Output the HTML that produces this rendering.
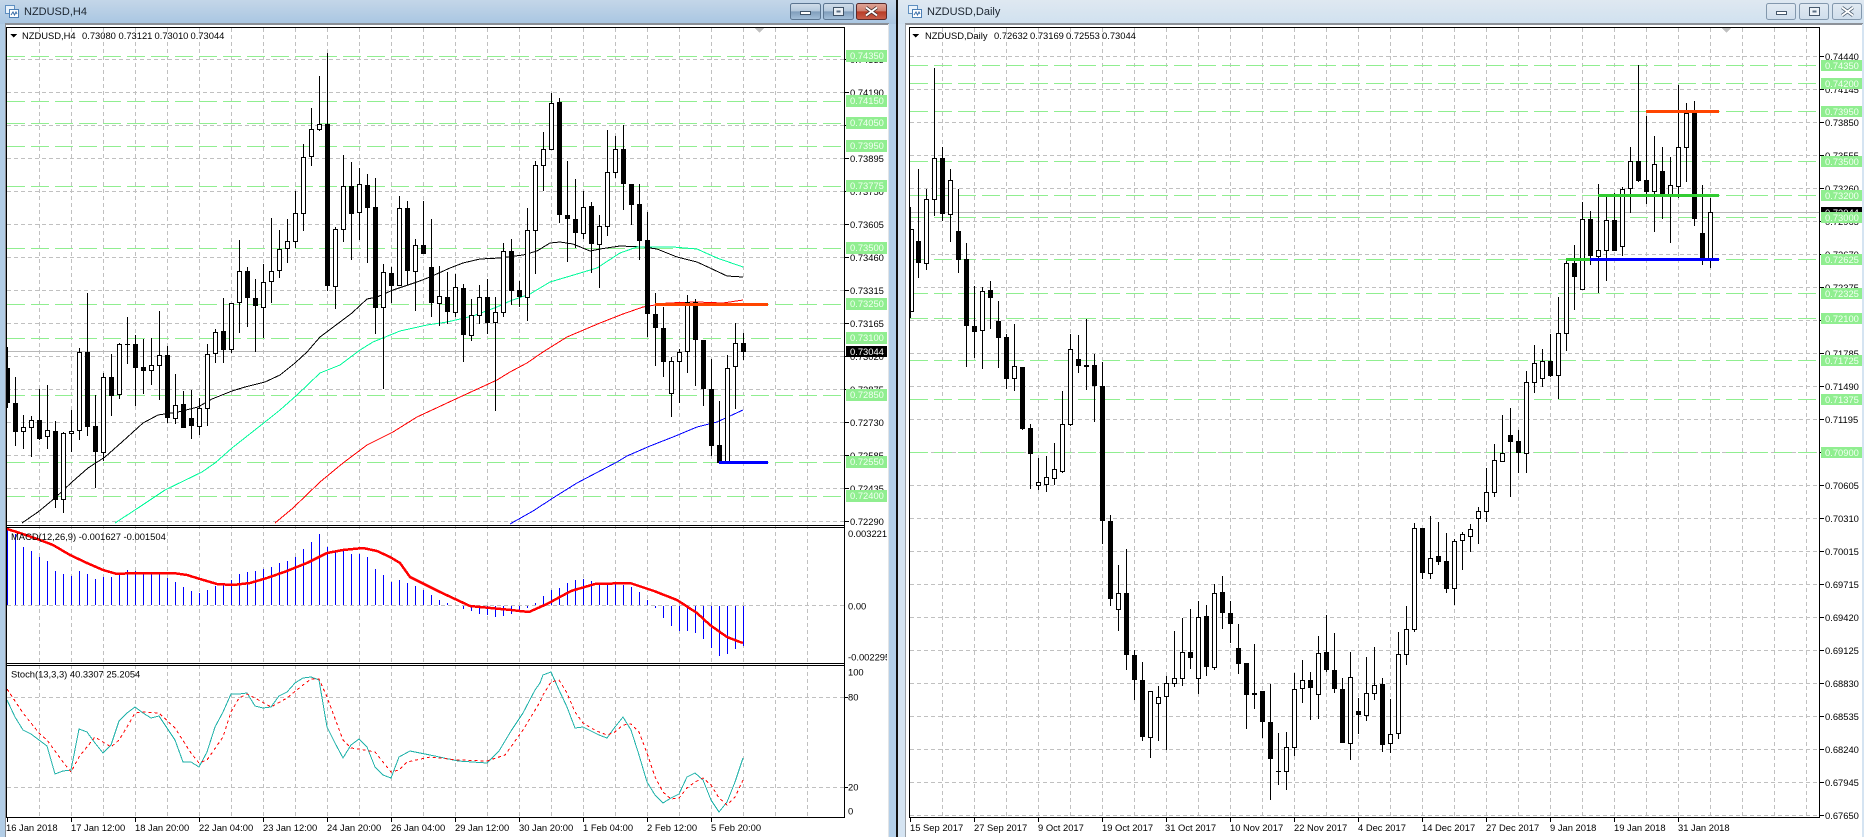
<!DOCTYPE html>
<html><head><meta charset="utf-8"><title>NZDUSD charts</title>
<style>
html,body{margin:0;padding:0;background:#fff;width:1864px;height:837px;overflow:hidden}
svg{display:block;position:absolute;left:0;top:0}
text{font-family:"Liberation Sans",sans-serif;font-size:9.4px;fill:#000;shape-rendering:auto}
.t{font-size:11px;fill:#1c2530}
.g{fill:#f2fff2}
.w{fill:#fff}
</style></head><body>
<svg width="1864" height="837" viewBox="0 0 1864 837" xmlns="http://www.w3.org/2000/svg" shape-rendering="crispEdges">
<defs>
<linearGradient id="ta" x1="0" y1="0" x2="0" y2="1"><stop offset="0" stop-color="#c4d6e8"/><stop offset="1" stop-color="#a9c6e2"/></linearGradient>
<linearGradient id="ti" x1="0" y1="0" x2="0" y2="1"><stop offset="0" stop-color="#dfe8f1"/><stop offset="1" stop-color="#d0e1f0"/></linearGradient>
<linearGradient id="ba" x1="0" y1="0" x2="0" y2="1"><stop offset="0" stop-color="#d2deea"/><stop offset=".48" stop-color="#b4c8dc"/><stop offset=".5" stop-color="#7e9cba"/><stop offset="1" stop-color="#a5c0da"/></linearGradient>
<linearGradient id="bc" x1="0" y1="0" x2="0" y2="1"><stop offset="0" stop-color="#dfa598"/><stop offset=".48" stop-color="#cf7f6e"/><stop offset=".5" stop-color="#b83a24"/><stop offset="1" stop-color="#c9604c"/></linearGradient>
<linearGradient id="bi" x1="0" y1="0" x2="0" y2="1"><stop offset="0" stop-color="#e2eaf2"/><stop offset="1" stop-color="#cfdeec"/></linearGradient>
</defs>
<!-- window chrome -->
<rect width="1864" height="837" fill="#fff"/>
<rect x="0" y="0" width="897" height="24" fill="url(#ta)"/>
<rect x="0" y="24" width="5" height="813" fill="#b2cde6"/>
<rect x="5" y="23" width="884" height="2" fill="#8a8f96"/>
<rect x="5" y="24" width="1" height="813" fill="#8a8f96"/>
<rect x="888" y="24" width="1" height="813" fill="#e2e4e6"/>
<rect x="889" y="24" width="7" height="813" fill="#b3cfe9"/>
<rect x="896" y="0" width="2" height="837" fill="#111"/>
<rect x="898" y="0" width="966" height="24" fill="url(#ti)"/>
<rect x="898" y="24" width="7" height="813" fill="#d5e4f2"/>
<rect x="905" y="23" width="958" height="2" fill="#8d9299"/>
<rect x="905" y="24" width="1" height="813" fill="#9aa0a6"/>
<rect x="1862" y="24" width="2" height="813" fill="#d5e4f2"/>
<!-- title icons -->
<g shape-rendering="auto">
<rect x="5.500" y="5.500" width="9" height="8" fill="#eaf3fb" stroke="#5f8fc0"/>
<rect x="9.500" y="9.500" width="9" height="8" fill="#fff" stroke="#4c7fb5"/>
<path d="M11 15l2-3 1.500 3 1.500-3 1 2" fill="none" stroke="#3a6ea8"/>
<rect x="908.500" y="5.500" width="9" height="8" fill="#eaf3fb" stroke="#5f8fc0"/>
<rect x="912.500" y="9.500" width="9" height="8" fill="#fff" stroke="#4c7fb5"/>
<path d="M914 15l2-3 1.500 3 1.500-3 1 2" fill="none" stroke="#3a6ea8"/>
</g>
<text class="t" x="24" y="15">NZDUSD,H4</text>
<text class="t" x="927" y="15">NZDUSD,Daily</text>
<!-- window buttons -->
<g shape-rendering="auto">
<rect x="790.500" y="3.500" width="30" height="16" rx="2" fill="url(#ba)" stroke="#5b7590"/>
<rect x="800.500" y="11.500" width="10" height="3" fill="#fff" stroke="#3f5266"/>
<rect x="823.500" y="3.500" width="30" height="16" rx="2" fill="url(#ba)" stroke="#5b7590"/>
<rect x="833.500" y="7.500" width="10" height="8" fill="#e8eef4" stroke="#3f5266"/>
<rect x="836.500" y="10.500" width="4" height="2" fill="#5a6f85"/>
<rect x="856.500" y="3.500" width="30" height="16" rx="2" fill="url(#bc)" stroke="#5a2a2a"/>
<path d="M866 7.500l11 8M877 7.500l-11 8" stroke="#3f2a2a" stroke-width="3.400"/>
<path d="M866 7.500l11 8M877 7.500l-11 8" stroke="#fff" stroke-width="2"/>
<rect x="1766.500" y="3.500" width="29" height="16" rx="2" fill="url(#bi)" stroke="#8398ad"/>
<rect x="1776.500" y="11.500" width="10" height="3" fill="#fff" stroke="#46586b"/>
<rect x="1799.500" y="3.500" width="29" height="16" rx="2" fill="url(#bi)" stroke="#8398ad"/>
<rect x="1809.500" y="7.500" width="10" height="8" fill="#eef3f8" stroke="#46586b"/>
<rect x="1812.500" y="10.500" width="4" height="2" fill="#5a6f85"/>
<rect x="1832.500" y="3.500" width="29" height="16" rx="2" fill="url(#bi)" stroke="#8398ad"/>
<path d="M1842 7.500l11 8M1853 7.500l-11 8" stroke="#46586b" stroke-width="3.400"/>
<path d="M1842 7.500l11 8M1853 7.500l-11 8" stroke="#fff" stroke-width="2"/>
</g>

<!-- LEFT grid -->
<g fill="none" stroke="#c0c0c0" stroke-dasharray="4 3">
<path d="M39.5 28V818M71.5 28V818M103.5 28V818M135.5 28V818M167.5 28V818M199.5 28V818M231.5 28V818M263.5 28V818M295.5 28V818M327.5 28V818M359.5 28V818M391.5 28V818M423.5 28V818M455.5 28V818M487.5 28V818M519.5 28V818M551.5 28V818M583.5 28V818M615.5 28V818M647.5 28V818M679.5 28V818M711.5 28V818M743.5 28V818M775.5 28V818M807.5 28V818"/>
<path d="M7 59.5H844M7 92.5H844M7 125.5H844M7 158.5H844M7 191.5H844M7 224.5H844M7 257.5H844M7 290.5H844M7 323.5H844M7 356.5H844M7 389.5H844M7 422.5H844M7 455.5H844M7 488.5H844M7 521.5H844M7 605.5H844M7 697.5H844M7 787.5H844"/>
</g>
<path d="M7 351.5H844" stroke="#b8b8b8"/>
<path d="M7 56.5H841M7 101.5H841M7 123.5H841M7 146.5H841M7 186.5H841M7 248.5H841M7 304.5H841M7 338.5H841M7 395.5H841M7 462.5H841M7 496.5H841" stroke="#90ee90" stroke-dasharray="18 6" fill="none"/>
<!-- triangle -->
<path d="M755 28h9l-4.500 5z" fill="#c0c0c0"/>
<!-- MAs -->
<g fill="none">
<polyline stroke="#000" points="22,523 38,512 55,498 72,482 88,468 105,457 122,442 143,423 158,415 178,412 198,407 212,399 232,391 245,387 265,382 280,375 295,363 307,352 320,337 340,322 352,313 367,299 377,297 393,290 417,282 430,277 450,268 463,263 480,259 500,258 523,255 537,251 550,243 560,242 573,244 590,251 600,249 620,246 643,247 657,249 677,257 697,262 710,268 727,276 743,277"/>
<polyline stroke="#00fa9a" points="115,523 138,508 165,490 202,472 215,463 232,448 265,422 280,410 297,395 320,373 340,365 360,350 373,342 400,331 427,325 447,322 473,316 497,307 510,301 530,294 550,282 577,274 597,268 620,253 637,247 673,247 697,249 717,258 743,267"/>
<polyline stroke="#ff0000" points="275,523 293,508 320,482 343,463 367,445 393,432 417,417 460,397 497,380 510,372 527,363 543,352 567,337 600,323 623,314 643,307 667,303 697,302 723,303 743,300"/>
<polyline stroke="#0000ff" points="510,524 533,511 553,498 577,483 617,462 627,456 650,446 673,437 697,427 717,422 743,410"/>
</g>
<!-- LEFT candles -->
<path stroke="#000" fill="none" d="M7.5 347V408M15.5 377V446M23.5 415V449M31.5 416V457M39.5 389V440M47.5 385V449M55.5 421V508M63.5 432V513M71.5 410V452M79.5 348V440M87.5 293V436M95.5 395V488M103.5 373V461M111.5 354V416M119.5 343V399M127.5 317V364M135.5 335V406M143.5 339V394M151.5 338V385M159.5 311V400M167.5 346V423M175.5 374V424M183.5 391V428M191.5 390V439M199.5 398V435M207.5 344V426M215.5 329V363M223.5 298V363M231.5 303V353M239.5 240V333M247.5 267V327M255.5 279V352M263.5 264V338M271.5 218V303M279.5 230V278M287.5 219V263M295.5 191V248M303.5 144V231M311.5 108V166M319.5 76V131M327.5 53V291M335.5 227V309M343.5 155V242M351.5 162V260M359.5 168V240M367.5 174V263M375.5 178V334M383.5 264V389M391.5 267V303M399.5 196V286M407.5 201V285M415.5 239V311M423.5 201V254M431.5 219V317M439.5 266V326M447.5 272V324M455.5 274V317M463.5 284V362M471.5 299V341M479.5 285V324M487.5 279V334M495.5 297V411M503.5 243V317M511.5 239V305M519.5 281V307M527.5 208V321M535.5 161V274M543.5 132V191M551.5 93V150M559.5 98V223M567.5 161V262M575.5 179V248M583.5 191V239M591.5 202V273M599.5 215V288M607.5 130V236M615.5 136V178M623.5 125V210M631.5 184V225M639.5 184V260M647.5 212V337M655.5 293V366M663.5 307V377M671.5 357V417M679.5 349V403M687.5 295V373M695.5 299V386M703.5 340V406M711.5 359V456M719.5 401V463M727.5 355V462M735.5 323V409M743.5 333V360"/>
<path fill="#000" d="M7 368h3V403h-3zM13 403h5V432h-5zM37 420h5V439h-5zM53 431h5V500h-5zM85 352h5V427h-5zM93 426h5V452h-5zM109 377h5V396h-5zM125 344h5v1h-5zM133 344h5V368h-5zM141 367h5V371h-5zM165 355h5V418h-5zM181 404h5V428h-5zM189 418h5V426h-5zM221 331h5V350h-5zM245 271h5V298h-5zM253 298h5V306h-5zM325 124h5V286h-5zM349 186h5V214h-5zM365 185h5V208h-5zM373 207h5V308h-5zM389 273h5V286h-5zM405 208h5V271h-5zM421 245h5V254h-5zM429 267h5V303h-5zM445 297h5V312h-5zM461 288h5V335h-5zM485 297h5V323h-5zM509 251h5V291h-5zM517 290h5V297h-5zM557 102h5V215h-5zM565 215h5V219h-5zM573 219h5V233h-5zM589 206h5V244h-5zM621 149h5V184h-5zM629 184h5V205h-5zM637 204h5V241h-5zM645 240h5V314h-5zM653 314h5V328h-5zM661 328h5V362h-5zM693 302h5V340h-5zM701 340h5V389h-5zM709 389h5V446h-5zM717 445h5V463h-5zM741 343h5V352h-5z"/>
<path fill="#fff" stroke="#000" d="M21.5 427.5h4V431.5h-4zM29.5 420.5h4V427.5h-4zM45.5 430.5h4V436.5h-4zM61.5 433.5h4V499.5h-4zM69.5 431.5h4V433.5h-4zM77.5 352.5h4V430.5h-4zM101.5 377.5h4V452.5h-4zM117.5 344.5h4V394.5h-4zM149.5 365.5h4V370.5h-4zM157.5 355.5h4V365.5h-4zM173.5 405.5h4V418.5h-4zM197.5 408.5h4V426.5h-4zM205.5 354.5h4V408.5h-4zM213.5 332.5h4V353.5h-4zM229.5 303.5h4V349.5h-4zM237.5 271.5h4V302.5h-4zM261.5 282.5h4V307.5h-4zM269.5 271.5h4V281.5h-4zM277.5 249.5h4V270.5h-4zM285.5 241.5h4V248.5h-4zM293.5 213.5h4V241.5h-4zM301.5 157.5h4V213.5h-4zM309.5 129.5h4V156.5h-4zM317.5 124.5h4V129.5h-4zM333.5 229.5h4V286.5h-4zM341.5 186.5h4V229.5h-4zM357.5 184.5h4V212.5h-4zM381.5 272.5h4V307.5h-4zM397.5 208.5h4V285.5h-4zM413.5 245.5h4V271.5h-4zM437.5 296.5h4V303.5h-4zM453.5 287.5h4V312.5h-4zM469.5 315.5h4V335.5h-4zM477.5 297.5h4V315.5h-4zM493.5 312.5h4V322.5h-4zM501.5 251.5h4V312.5h-4zM525.5 230.5h4V297.5h-4zM533.5 165.5h4V230.5h-4zM541.5 149.5h4V165.5h-4zM549.5 103.5h4V149.5h-4zM581.5 207.5h4V233.5h-4zM597.5 226.5h4V244.5h-4zM605.5 172.5h4V226.5h-4zM613.5 149.5h4V172.5h-4zM669.5 361.5h4V393.5h-4zM677.5 352.5h4V361.5h-4zM685.5 302.5h4V351.5h-4zM725.5 368.5h4V462.5h-4zM733.5 343.5h4V366.5h-4z"/>
<rect x="655" y="303" width="113" height="3" fill="#ff4500"/>
<rect x="719" y="461" width="49" height="3" fill="#0000ff"/>

<!-- MACD -->
<path stroke="#0000ff" fill="none" d="M7.5 605V528M15.5 605V534M23.5 605V547M31.5 605V551M39.5 605V557M47.5 605V561M55.5 605V571M63.5 605V574M71.5 605V576M79.5 605V571M87.5 605V574M95.5 605V579M103.5 605V577M111.5 605V577M119.5 605V574M127.5 605V570M135.5 605V571M143.5 605V573M151.5 605V573M159.5 605V573M167.5 605V578M175.5 605V582M183.5 605V587M191.5 605V591M199.5 605V593M207.5 605V590M215.5 605V586M223.5 605V584M231.5 605V580M239.5 605V574M247.5 605V572M255.5 605V571M263.5 605V569M271.5 605V567M279.5 605V563M287.5 605V561M295.5 605V557M303.5 605V549M311.5 605V542M319.5 605V534M327.5 605V547M335.5 605V552M343.5 605V551M351.5 605V554M359.5 605V554M367.5 605V557M375.5 605V569M383.5 605V575M391.5 605V582M399.5 605V580M407.5 605V583M415.5 605V586M423.5 605V590M431.5 605V595M439.5 605V600M447.5 605V603M463.5 606V609M471.5 606V611M479.5 606V614M487.5 606V615M495.5 606V617M503.5 606V616M511.5 606V614M519.5 606V611M527.5 606V608M535.5 605V603M543.5 605V596M551.5 605V590M559.5 605V588M567.5 605V583M575.5 605V580M583.5 605V579M591.5 605V581M599.5 605V583M607.5 605V585M615.5 605V584M623.5 605V585M631.5 605V587M639.5 605V592M647.5 605V600M655.5 606V608M663.5 606V618M671.5 606V626M679.5 606V631M687.5 606V631M695.5 606V633M703.5 606V639M711.5 606V648M719.5 606V656M727.5 606V654M735.5 606V649M743.5 606V646"/>
<polyline fill="none" stroke="#ff0000" stroke-width="2.500" points="7,529 20,533 40,540 53,545 70,555 87,563 103,570 117,574 133,573 173,573 187,575 200,579 217,584 233,585 250,583 267,578 287,571 307,563 327,553 343,550 363,548 377,551 390,557 400,563 410,577 440,592 470,606 511,610 529,612 547,604 571,591 595,584 630,583 654,591 677,600 697,613 710,625 727,637 740,642 743,643"/>

<!-- Stoch -->
<polyline fill="none" stroke="#20b2aa" points="7,700 15,717 23,730 31,734 39,740 47,746 55,774 63,771 71,770 79,729 87,732 95,743 103,753 111,745 119,721 127,713 135,707 143,713 151,718 159,716 167,728 175,740 183,762 191,762 199,767 207,752 215,727 223,712 231,694 239,694 247,693 255,706 263,708 271,707 279,696 287,692 295,683 303,678 311,677 319,680 327,727 335,743 343,758 351,745 359,739 367,747 375,767 383,775 391,778 399,757 410,751 430,755 458,761 487,763 499,751 511,731 523,713 535,690 540,683 543,675 551,672 559,690 567,707 575,728 583,727 591,731 599,735 607,738 615,727 623,717 631,730 639,755 647,782 655,795 663,803 671,798 679,794 687,777 695,773 703,780 711,800 719,812 727,802 735,782 743,758"/>
<polyline fill="none" stroke="#ff0000" stroke-dasharray="3 3" points="7,689 23,713 39,733 47,740 63,762 71,772 79,757 95,737 111,747 119,740 127,727 135,713 143,712 159,713 175,728 191,753 199,763 207,760 223,737 231,712 239,698 247,694 255,698 271,707 287,698 303,685 311,679 319,679 327,697 343,740 351,748 359,749 375,752 391,772 399,770 407,762 430,757 458,760 487,761 505,755 523,730 540,702 543,695 551,682 559,680 567,693 575,712 583,723 591,728 599,732 607,735 615,732 623,725 631,724 639,732 647,753 655,777 663,792 671,799 679,798 687,788 695,782 703,778 711,785 719,798 727,805 735,797 743,780"/>

<!-- LEFT frame -->
<path stroke="#000" fill="none" d="M6.5 27.5H844.5V817.5H6.5ZM6 525.5H845M6 527.5H845M6 663.5H845M6 665.5H845"/>
<path stroke="#000" fill="none" d="M845 59.500h4M845 92.500h4M845 125.500h4M845 158.500h4M845 191.500h4M845 224.500h4M845 257.500h4M845 290.500h4M845 323.500h4M845 356.500h4M845 389.500h4M845 422.500h4M845 455.500h4M845 488.500h4M845 521.500h4M845 697.500h3M845 787.500h3M7.500 818v4M71.500 818v4M135.500 818v4M199.500 818v4M263.500 818v4M327.500 818v4M391.500 818v4M455.500 818v4M519.500 818v4M583.500 818v4M647.500 818v4M711.500 818v4"/>
<path d="M10 34h7l-3.500 3.500z" fill="#000"/>
<text x="22" y="39">NZDUSD,H4</text><text x="82" y="39">0.73080</text><text x="118.500" y="39">0.73121</text><text x="154.500" y="39">0.73010</text><text x="190.500" y="39">0.73044</text>
<text x="11" y="540">MACD(12,26,9) -0.001627 -0.001504</text>
<text x="11" y="677.500">Stoch(13,3,3) 40.3307 25.2054</text>
<!-- left axis -->
<g>
<text x="850" y="63">0.74335</text><text x="850" y="96">0.74190</text><text x="850" y="129">0.74042</text><text x="850" y="162">0.73895</text><text x="850" y="195">0.73750</text><text x="850" y="228">0.73605</text><text x="850" y="261">0.73460</text><text x="850" y="294">0.73315</text><text x="850" y="327">0.73165</text><text x="850" y="360">0.73020</text><text x="850" y="393">0.72875</text><text x="850" y="426">0.72730</text><text x="850" y="459">0.72585</text><text x="850" y="492">0.72435</text><text x="850" y="525">0.72290</text>
<text x="848" y="537">0.003221</text><text x="848" y="609.500">0.00</text>
<svg x="845" y="640" width="42" height="30"><text x="3" y="20.500">-0.002295</text></svg>
<text x="848" y="675.500">100</text><text x="848" y="700.500">80</text><text x="848" y="790.500">20</text><text x="848" y="814.500">0</text>
</g>
<g fill="#90ee90">
<rect x="846" y="50" width="41" height="12"/><rect x="846" y="95" width="41" height="12"/><rect x="846" y="117" width="41" height="12"/><rect x="846" y="140" width="41" height="12"/><rect x="846" y="180" width="41" height="12"/><rect x="846" y="242" width="41" height="12"/><rect x="846" y="298" width="41" height="12"/><rect x="846" y="332" width="41" height="12"/><rect x="846" y="389" width="41" height="12"/><rect x="846" y="456" width="41" height="12"/><rect x="846" y="490" width="41" height="12"/>
</g>
<rect x="846" y="346" width="41" height="11" fill="#000"/>
<text class="w" x="850" y="355">0.73044</text>
<text class="g" x="850" y="59">0.74350</text><text class="g" x="850" y="104">0.74150</text><text class="g" x="850" y="126">0.74050</text><text class="g" x="850" y="149">0.73950</text><text class="g" x="850" y="189">0.73775</text><text class="g" x="850" y="251">0.73500</text><text class="g" x="850" y="307">0.73250</text><text class="g" x="850" y="341">0.73100</text><text class="g" x="850" y="398">0.72850</text><text class="g" x="850" y="465">0.72550</text><text class="g" x="850" y="499">0.72400</text>
<!-- left x axis -->
<text x="6" y="831">16 Jan 2018</text><text x="71" y="831">17 Jan 12:00</text><text x="135" y="831">18 Jan 20:00</text><text x="199" y="831">22 Jan 04:00</text><text x="263" y="831">23 Jan 12:00</text><text x="327" y="831">24 Jan 20:00</text><text x="391" y="831">26 Jan 04:00</text><text x="455" y="831">29 Jan 12:00</text><text x="519" y="831">30 Jan 20:00</text><text x="583" y="831">1 Feb 04:00</text><text x="647" y="831">2 Feb 12:00</text><text x="711" y="831">5 Feb 20:00</text>

<!-- RIGHT grid -->
<g fill="none" stroke="#c0c0c0" stroke-dasharray="4 3">
<path d="M942.5 28V818M974.5 28V818M1006.5 28V818M1038.5 28V818M1070.5 28V818M1102.5 28V818M1134.5 28V818M1166.5 28V818M1198.5 28V818M1230.5 28V818M1262.5 28V818M1294.5 28V818M1326.5 28V818M1358.5 28V818M1390.5 28V818M1422.5 28V818M1454.5 28V818M1486.5 28V818M1518.5 28V818M1550.5 28V818M1582.5 28V818M1614.5 28V818M1646.5 28V818M1678.5 28V818M1710.5 28V818M1742.5 28V818M1774.5 28V818M1806.5 28V818"/>
<path d="M910 56.5H1819M910 89.5H1819M910 122.5H1819M910 155.5H1819M910 188.5H1819M910 221.5H1819M910 254.5H1819M910 287.5H1819M910 320.5H1819M910 353.5H1819M910 386.5H1819M910 419.5H1819M910 452.5H1819M910 485.5H1819M910 518.5H1819M910 551.5H1819M910 584.5H1819M910 617.5H1819M910 650.5H1819M910 683.5H1819M910 716.5H1819M910 749.5H1819M910 782.5H1819M910 815.5H1819"/>
</g>
<path d="M910 212.5H1819" stroke="#b8b8b8"/>
<path d="M910 65.5H1816M910 83.5H1816M910 111.5H1816M910 161.5H1816M910 195.5H1816M910 217.5H1816M910 259.5H1816M910 293.5H1816M910 318.5H1816M910 360.5H1816M910 399.5H1816M910 452.5H1816" stroke="#90ee90" stroke-dasharray="18 6" fill="none"/>
<path d="M1722 28h9l-4.500 5z" fill="#c0c0c0"/>
<!-- RIGHT candles -->
<path stroke="#000" fill="none" d="M910.5 207V318M918.5 169V278M926.5 189V270M934.5 68V216M942.5 147V221M950.5 169V242M958.5 189V273M966.5 243V367M974.5 286V358M982.5 287V369M990.5 281V329M998.5 301V368M1006.5 334V389M1014.5 324V391M1022.5 367V430M1030.5 424V489M1038.5 458V490M1046.5 456V492M1054.5 443V485M1062.5 391V473M1070.5 334V426M1078.5 335V373M1086.5 319V390M1094.5 354V422M1102.5 362V544M1110.5 515V606M1118.5 565V631M1126.5 549V670M1134.5 650V700M1142.5 662V741M1150.5 691V758M1158.5 686V741M1166.5 676V750M1174.5 631V687M1182.5 618V686M1190.5 609V669M1198.5 601V694M1206.5 605V676M1214.5 584V670M1222.5 576V629M1230.5 601V643M1238.5 624V674M1246.5 663V729M1254.5 644V709M1262.5 691V738M1270.5 684V800M1278.5 733V785M1286.5 732V790M1294.5 673V756M1302.5 660V703M1310.5 672V720M1318.5 636V719M1326.5 615V672M1334.5 633V693M1342.5 678V743M1350.5 652V760M1358.5 698V734M1366.5 657V721M1374.5 647V700M1382.5 678V752M1390.5 699V753M1398.5 632V739M1406.5 606V665M1414.5 523V632M1422.5 528V579M1430.5 516V579M1438.5 522V565M1446.5 533V593M1454.5 539V605M1462.5 532V570M1470.5 524V552M1478.5 507V544M1486.5 468V522M1494.5 444V497M1502.5 415V462M1510.5 408V497M1518.5 430V473M1526.5 371V473M1534.5 345V393M1542.5 349V387M1550.5 334V377M1558.5 297V399M1566.5 260V351M1574.5 245V310M1582.5 202V289M1590.5 211V265M1598.5 184V293M1606.5 196V281M1614.5 193V251M1622.5 187V256M1630.5 147V213M1638.5 65V182M1646.5 116V204M1654.5 136V232M1662.5 147V219M1670.5 157V243M1678.5 85V198M1686.5 103V182M1694.5 101V226M1702.5 185V265M1710.5 198V268"/>
<path fill="#000" d="M916 241h5V263h-5zM940 158h5V214h-5zM956 231h5V260h-5zM964 259h5V326h-5zM972 326h5V332h-5zM988 290h5V298h-5zM996 321h5V338h-5zM1004 337h5V379h-5zM1020 367h5V429h-5zM1028 428h5V454h-5zM1076 359h5V366h-5zM1092 365h5V386h-5zM1100 386h5V521h-5zM1108 521h5V599h-5zM1124 593h5V655h-5zM1132 655h5V680h-5zM1140 680h5V737h-5zM1188 652h5V658h-5zM1204 616h5V667h-5zM1220 592h5V613h-5zM1228 613h5V624h-5zM1236 648h5V664h-5zM1244 663h5V695h-5zM1252 693h5V695h-5zM1260 691h5V722h-5zM1268 722h5V759h-5zM1276 771h5V772h-5zM1308 680h5V688h-5zM1324 652h5V670h-5zM1332 670h5V689h-5zM1340 689h5V743h-5zM1356 711h5V715h-5zM1380 684h5V745h-5zM1420 528h5V573h-5zM1436 556h5V562h-5zM1444 561h5V589h-5zM1508 435h5V442h-5zM1516 441h5V453h-5zM1548 361h5V376h-5zM1572 263h5V277h-5zM1588 219h5V256h-5zM1612 220h5V251h-5zM1636 161h5V181h-5zM1644 180h5V192h-5zM1660 171h5V196h-5zM1692 113h5V219h-5zM1700 233h5V259h-5z"/>
<path fill="#fff" stroke="#000" d="M910.5 229.5h3V311.5h-3zM924.5 199.5h4V263.5h-4zM932.5 158.5h4V199.5h-4zM948.5 180.5h4V214.5h-4zM980.5 291.5h4V330.5h-4zM1012.5 366.5h4V378.5h-4zM1036.5 482.5h4V485.5h-4zM1044.5 477.5h4V484.5h-4zM1052.5 469.5h4V478.5h-4zM1060.5 424.5h4V471.5h-4zM1068.5 349.5h4V424.5h-4zM1084.5 365.5h4V366.5h-4zM1116.5 593.5h4V609.5h-4zM1148.5 691.5h4V737.5h-4zM1156.5 697.5h4V703.5h-4zM1164.5 683.5h4V696.5h-4zM1172.5 678.5h4V683.5h-4zM1180.5 652.5h4V678.5h-4zM1196.5 617.5h4V678.5h-4zM1212.5 593.5h4V667.5h-4zM1284.5 747.5h4V771.5h-4zM1292.5 689.5h4V747.5h-4zM1300.5 680.5h4V688.5h-4zM1316.5 653.5h4V694.5h-4zM1348.5 677.5h4V743.5h-4zM1364.5 693.5h4V715.5h-4zM1372.5 685.5h4V693.5h-4zM1388.5 734.5h4V743.5h-4zM1396.5 654.5h4V733.5h-4zM1404.5 629.5h4V654.5h-4zM1412.5 528.5h4V629.5h-4zM1428.5 558.5h4V573.5h-4zM1452.5 541.5h4V588.5h-4zM1460.5 534.5h4V540.5h-4zM1468.5 529.5h4V536.5h-4zM1476.5 511.5h4V518.5h-4zM1484.5 492.5h4V511.5h-4zM1492.5 460.5h4V492.5h-4zM1500.5 453.5h4V461.5h-4zM1524.5 382.5h4V453.5h-4zM1532.5 363.5h4V382.5h-4zM1540.5 361.5h4V378.5h-4zM1556.5 333.5h4V375.5h-4zM1564.5 263.5h4V333.5h-4zM1580.5 219.5h4V289.5h-4zM1596.5 250.5h4V256.5h-4zM1604.5 220.5h4V250.5h-4zM1620.5 189.5h4V246.5h-4zM1628.5 161.5h4V188.5h-4zM1652.5 164.5h4V191.5h-4zM1668.5 185.5h4V195.5h-4zM1676.5 147.5h4V186.5h-4zM1684.5 113.5h4V147.5h-4zM1708.5 212.5h4V258.5h-4z"/>
<rect x="1646" y="110" width="73" height="3" fill="#ff4500"/>
<rect x="1598" y="194" width="121" height="3" fill="#32cd32"/>
<rect x="1566" y="258" width="24" height="3" fill="#32cd32"/>
<rect x="1590" y="258" width="129" height="3" fill="#0000ff"/>
<!-- RIGHT frame -->
<path stroke="#000" fill="none" d="M909.5 27.5H1819.5V817.5H909.5Z"/>
<path stroke="#000" fill="none" d="M1820 56.500h4M1820 89.500h4M1820 122.500h4M1820 155.500h4M1820 188.500h4M1820 221.500h4M1820 254.500h4M1820 287.500h4M1820 320.500h4M1820 353.500h4M1820 386.500h4M1820 419.500h4M1820 452.500h4M1820 485.500h4M1820 518.500h4M1820 551.500h4M1820 584.500h4M1820 617.500h4M1820 650.500h4M1820 683.500h4M1820 716.500h4M1820 749.500h4M1820 782.500h4M1820 815.500h4M910.500 818v4M974.500 818v4M1038.500 818v4M1102.500 818v4M1166.500 818v4M1230.500 818v4M1294.500 818v4M1358.500 818v4M1422.500 818v4M1486.500 818v4M1550.500 818v4M1614.500 818v4M1678.500 818v4"/>
<path d="M912 34h7l-3.500 3.500z" fill="#000"/>
<text x="925" y="39">NZDUSD,Daily</text><text x="994" y="39">0.72632</text><text x="1030" y="39">0.73169</text><text x="1066" y="39">0.72553</text><text x="1102" y="39">0.73044</text>
<g>
<text x="1825" y="60">0.74440</text><text x="1825" y="93">0.74145</text><text x="1825" y="126">0.73850</text><text x="1825" y="159">0.73555</text><text x="1825" y="192">0.73260</text><text x="1825" y="225">0.72965</text><text x="1825" y="258">0.72670</text><text x="1825" y="291">0.72375</text><text x="1825" y="324">0.72080</text><text x="1825" y="357">0.71785</text><text x="1825" y="390">0.71490</text><text x="1825" y="423">0.71195</text><text x="1825" y="456">0.70900</text><text x="1825" y="489">0.70605</text><text x="1825" y="522">0.70310</text><text x="1825" y="555">0.70015</text><text x="1825" y="588">0.69715</text><text x="1825" y="621">0.69420</text><text x="1825" y="654">0.69125</text><text x="1825" y="687">0.68830</text><text x="1825" y="720">0.68535</text><text x="1825" y="753">0.68240</text><text x="1825" y="786">0.67945</text><text x="1825" y="819">0.67650</text>
</g>
<rect x="1821" y="207" width="41" height="11" fill="#000"/>
<text class="w" x="1825" y="216">0.73044</text>
<g fill="#90ee90">
<rect x="1821" y="60" width="41" height="11"/><rect x="1821" y="78" width="41" height="11"/><rect x="1821" y="106" width="41" height="11"/><rect x="1821" y="156" width="41" height="11"/><rect x="1821" y="190" width="41" height="11"/><rect x="1821" y="212" width="41" height="11"/><rect x="1821" y="254" width="41" height="11"/><rect x="1821" y="288" width="41" height="11"/><rect x="1821" y="313" width="41" height="11"/><rect x="1821" y="355" width="41" height="11"/><rect x="1821" y="394" width="41" height="11"/><rect x="1821" y="447" width="41" height="11"/>
</g>
<text class="g" x="1825" y="69">0.74350</text><text class="g" x="1825" y="87">0.74200</text><text class="g" x="1825" y="115">0.73950</text><text class="g" x="1825" y="165">0.73500</text><text class="g" x="1825" y="199">0.73200</text><text class="g" x="1825" y="221">0.73000</text><text class="g" x="1825" y="263">0.72625</text><text class="g" x="1825" y="297">0.72325</text><text class="g" x="1825" y="322">0.72100</text><text class="g" x="1825" y="364">0.71725</text><text class="g" x="1825" y="403">0.71375</text><text class="g" x="1825" y="456">0.70900</text>
<text x="910" y="831">15 Sep 2017</text><text x="974" y="831">27 Sep 2017</text><text x="1038" y="831">9 Oct 2017</text><text x="1102" y="831">19 Oct 2017</text><text x="1165" y="831">31 Oct 2017</text><text x="1230" y="831">10 Nov 2017</text><text x="1294" y="831">22 Nov 2017</text><text x="1358" y="831">4 Dec 2017</text><text x="1422" y="831">14 Dec 2017</text><text x="1486" y="831">27 Dec 2017</text><text x="1550" y="831">9 Jan 2018</text><text x="1614" y="831">19 Jan 2018</text><text x="1678" y="831">31 Jan 2018</text>
</svg>
</body></html>
